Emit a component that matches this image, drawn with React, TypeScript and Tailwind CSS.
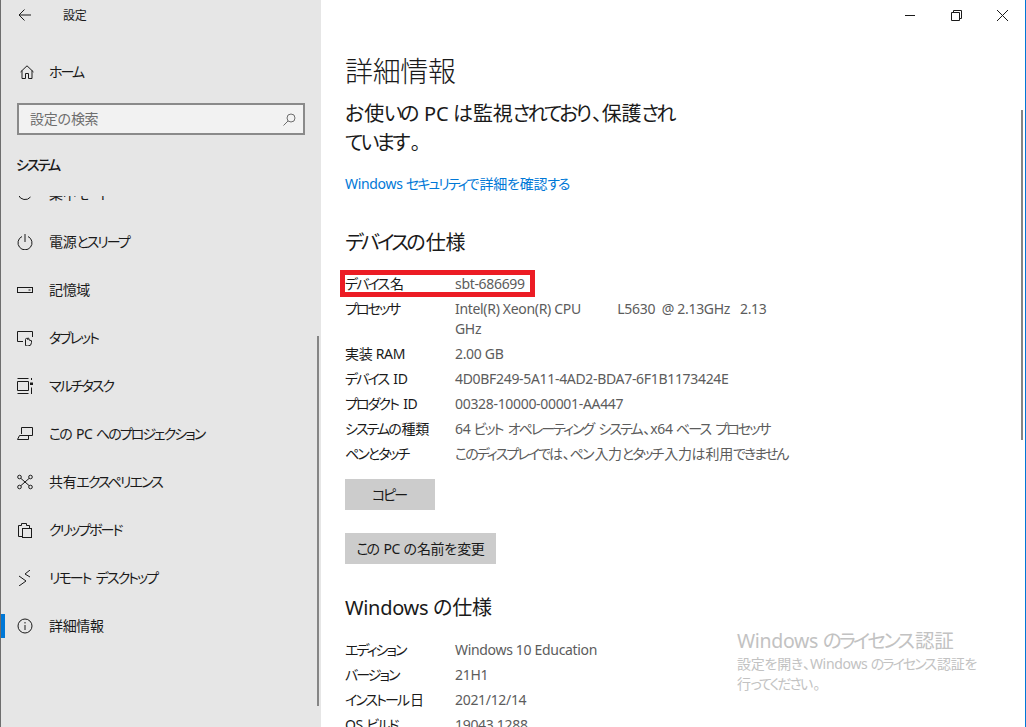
import type { ReactNode } from 'react';

const font = "font-['Noto_Sans','Noto_Sans_CJK_JP',sans-serif] [font-feature-settings:'palt'] tracking-[-0.02em]";

// the reference font has much narrower kana than Noto, so squeeze those runs only
function Jp({ text }: { text: string }) {
  const parts = text.split(/([\u3040-\u30ff]+)/);
  return (
    <>
      {parts.map((part, i) =>
        i % 2 === 1 ? (
          <span key={i} className="pr-[0.14em] tracking-[-0.14em]">{part}</span>
        ) : (
          part
        ),
      )}
    </>
  );
}

const navItems: { label: string; icon: ReactNode; active?: boolean }[] = [
  {
    label: '集中モード',
    icon: <path d="M1.500 9a7 7 0 0 0 12 2" />,
  },
  {
    label: '電源とスリープ',
    icon: (
      <>
        <path d="M5 2.500a7 7 0 1 0 6 0" />
        <path d="M8 0v8" />
      </>
    ),
  },
  {
    label: '記憶域',
    icon: (
      <>
        <rect x="0.5" y="5.500" width="15" height="5" />
        <path d="M11.500 8h2" />
      </>
    ),
  },
  {
    label: 'タブレット',
    icon: (
      <>
        <path d="M6 11.500H.500v-10h15V7" />
        <path d="M8.500 15.500v-6a1.100 1.100 0 0 1 2.200 0V8a1.100 1.100 0 0 1 1.300 1v1l2.500.7v1.800a3.500 3.500 0 0 1-3.500 3.500H10z" />
      </>
    ),
  },
  {
    label: 'マルチタスク',
    icon: (
      <>
        <path d="M.500 .500h11M.500 15.500h11M.500 3.500h11v9H.500z" />
        <path d="M14.500 0v2M14.500 9.500v6.500" />
        <rect x="13" y="4.500" width="3" height="2.500" fill="#1a1a1a" stroke="none" />
      </>
    ),
  },
  {
    label: 'この PC へのプロジェクション',
    icon: (
      <>
        <path d="M4.500 8V1.500h11v8h-5" />
        <path d="M.500 13.500h11v-4h-9l-2 4z" />
      </>
    ),
  },
  {
    label: '共有エクスペリエンス',
    icon: (
      <>
        <circle cx="2.500" cy="3" r="1.800" />
        <circle cx="13.500" cy="3" r="1.800" />
        <circle cx="2.500" cy="13" r="1.800" />
        <circle cx="13.500" cy="13" r="1.800" />
        <path d="M4 4.500l8 7M12 4.500l-8 7" />
      </>
    ),
  },
  {
    label: 'クリップボード',
    icon: (
      <>
        <path d="M5.500 14.500h-4v-11h3v-2h5v2h3v3" />
        <rect x="5.500" y="6.500" width="9" height="9" />
      </>
    ),
  },
  {
    label: 'リモート デスクトップ',
    icon: <path d="M2 6l7 5-7 5M13 0L8 4l5 3" />,
  },
  {
    label: '詳細情報',
    active: true,
    icon: (
      <>
        <circle cx="8" cy="8" r="7" />
        <path d="M8 7v5M8 4v1.500" />
      </>
    ),
  },
];

const deviceSpecs = [
  ['デバイス名', 'sbt-686699'],
  ['プロセッサ', 'Intel(R) Xeon(R) CPU           L5630  @ 2.13GHz   2.13\nGHz'],
  ['実装 RAM', '2.00 GB'],
  ['デバイス ID', '4D0BF249-5A11-4AD2-BDA7-6F1B1173424E'],
  ['プロダクト ID', '00328-10000-00001-AA447'],
  ['システムの種類', '64 ビット オペレーティング システム、x64 ベース プロセッサ'],
  ['ペンとタッチ', 'このディスプレイでは、ペン入力とタッチ入力は利用できません'],
];

const windowsSpecs = [
  ['エディション', 'Windows 10 Education'],
  ['バージョン', '21H1'],
  ['インストール日', '2021/12/14'],
  ['OS ビルド', '19043.1288'],
];

function NavRow({ label, icon, active }: { label: string; icon: ReactNode; active?: boolean }) {
  return (
    <div className="relative flex h-12 shrink-0 items-center pl-[16px] text-[14px] text-[#1a1a1a]">
      {active && <div className="absolute left-0 top-[12px] h-6 w-[4px] bg-[#0078d7]" />}
      <svg width="16" height="16" viewBox="0 0 16 16" fill="none" stroke="#1a1a1a" strokeWidth="1" className="shrink-0">
        {icon}
      </svg>
      <span className="mb-[2px] ml-[16px] whitespace-pre"><Jp text={label} /></span>
    </div>
  );
}

function SpecRow({ name, value }: { name: string; value: string }) {
  return (
    <div className="flex text-[14px] leading-[20px]">
      <div className="w-[110px] shrink-0 text-[#1a1a1a]"><Jp text={name} /></div>
      <div className="w-[350px] whitespace-pre-wrap text-[#5c5c5c]"><Jp text={value} /></div>
    </div>
  );
}

export default function App() {
  return (
    <div className={`flex h-[727px] w-[1026px] overflow-hidden border-l border-r border-l-[#6e6e6e] border-r-[#0078d7] bg-white ${font}`}>
      {/* Sidebar */}
      <aside className="relative flex h-full w-[320px] shrink-0 flex-col bg-[#e6e6e6]">
        <div className="flex h-[30px] shrink-0 items-center pl-[18px] text-[12px] text-[#1a1a1a]">
          <svg width="12" height="12" viewBox="0 0 12 12" fill="none" stroke="#1a1a1a" strokeWidth="1">
            <path d="M0 6h12M5.500 .500L0 6l5.500 5.500" />
          </svg>
          <span className="ml-[32px] mt-[2px]">設定</span>
        </div>
        <div className="mt-[18px] flex h-[48px] shrink-0 items-center pl-[19px] text-[14px] text-[#1a1a1a]">
          <svg width="14" height="14" viewBox="0 0 14 14" fill="none" stroke="#1a1a1a" strokeWidth="1">
            <path d="M.500 7L7 .800 13.500 7M2 5.500v8h3.500V8.500h3v5H12v-8" />
          </svg>
          <span className="mb-[2px] ml-[15px]"><Jp text="ホーム" /></span>
        </div>
        <div className="ml-[16px] mt-[7px] flex h-[32px] w-[288px] shrink-0 items-center justify-between border-2 border-[#8a8a8a] bg-[#f2f2f2] pl-[11px] pr-[7px] text-[14px] text-[#6e6e6e]">
          <span className="mb-[2px]"><Jp text="設定の検索" /></span>
          <svg width="13" height="13" viewBox="0 0 13 13" fill="none" stroke="#6e6e6e" strokeWidth="1">
            <circle cx="8" cy="5" r="4" />
            <path d="M5 8L.500 12.500" />
          </svg>
        </div>
        <div className="ml-[15px] mt-[18px] shrink-0 text-[14px] font-medium leading-[24px] text-[#1a1a1a]"><Jp text="システム" /></div>
        <div className="mt-[19px] min-h-0 flex-1 overflow-hidden">
          <div className="-mt-[26px] flex flex-col">
            {navItems.map((item) => (
              <NavRow key={item.label} label={item.label} icon={item.icon} active={item.active} />
            ))}
          </div>
        </div>
        <div className="absolute right-[2px] top-[336px] h-[370px] w-[2px] bg-[#858585]" />
      </aside>

      {/* Main */}
      <main className="relative h-full min-w-0 flex-1 overflow-hidden pl-[24px]">
        <div className="absolute right-0 top-0 flex h-[30px]">
          <div className="flex h-full w-[46px] items-center justify-center">
            <svg width="10" height="10" viewBox="0 0 10 10" stroke="#1a1a1a" strokeWidth="1"><path d="M0 5.500h10" /></svg>
          </div>
          <div className="flex h-full w-[46px] items-center justify-center">
            <svg width="11" height="11" viewBox="0 0 11 11" fill="none" stroke="#1a1a1a" strokeWidth="1">
              <path d="M.500 2.500h8v8h-8zM2.500 2.500V.500h8v8h-2" />
            </svg>
          </div>
          <div className="flex h-full w-[46px] items-center justify-center">
            <svg width="11" height="11" viewBox="0 0 11 11" stroke="#1a1a1a" strokeWidth="1"><path d="M0 0l11 11M11 0L0 11" /></svg>
          </div>
        </div>
        <div className="absolute right-[2px] top-[110px] h-[330px] w-[2px] bg-[#858585]" />

        <h1 className="pt-[49px] text-[28px] font-light leading-[44px] text-[#1a1a1a]">詳細情報</h1>
        <p className="mt-[6px] w-[330px] text-[20px] leading-[29px] text-[#1a1a1a]"><Jp text="お使いの PC は監視されており、保護されています。" /></p>
        <div className="mt-[17px] text-[14px] leading-[20px] text-[#0078d7]"><Jp text="Windows セキュリティで詳細を確認する" /></div>

        <h2 className="mt-[35px] text-[20px] font-normal leading-[28px] text-[#1a1a1a]"><Jp text="デバイスの仕様" /></h2>

        <div className="relative mt-[17px] flex flex-col gap-[5px]">
          <div className="absolute left-[-5px] top-[-4px] h-[27px] w-[195px] border-[5px] border-[#ec1c24]" />
          {deviceSpecs.map(([name, value]) => (
            <SpecRow key={name} name={name} value={value} />
          ))}
        </div>

        <button className="mt-[15px] block h-[31px] w-[90px] bg-[#cccccc] text-center text-[14px] text-[#1a1a1a]"><Jp text="コピー" /></button>
        <button className="mt-[23px] block h-[31px] w-[151px] bg-[#cccccc] text-center text-[14px] text-[#1a1a1a]"><Jp text="この PC の名前を変更" /></button>

        <h2 className="mt-[30px] text-[20px] font-normal leading-[28px] text-[#1a1a1a]"><Jp text="Windows の仕様" /></h2>
        <div className="mt-[18px] flex flex-col gap-[5px]">
          {windowsSpecs.map(([name, value]) => (
            <SpecRow key={name} name={name} value={value} />
          ))}
        </div>

        {/* Activation watermark */}
        <div className="absolute left-[416px] top-[629px] w-[250px] text-[#c2c2c2]">
          <div className="text-[19.5px] leading-[24px]"><Jp text="Windows のライセンス認証" /></div>
          <div className="mt-[1px] text-[14px] leading-[20px]"><Jp text="設定を開き、Windows のライセンス認証を行ってください。" /></div>
        </div>
      </main>
    </div>
  );
}
